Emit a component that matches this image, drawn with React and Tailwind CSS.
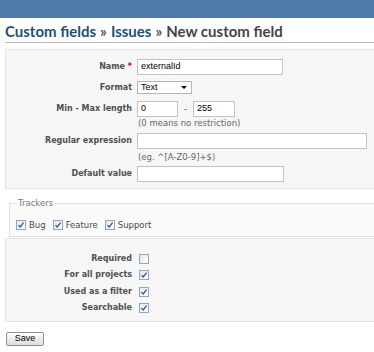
import React from "react";

// Small checkbox like the classic XP-ish one in the screenshot
const Check = ({ checked }) => (
  <span className="inline-flex h-[10px] w-[10px] shrink-0 items-center justify-center border border-[#97a3b6] bg-gradient-to-br from-[#e3e6eb] to-white">
    {checked && (
      <svg width="8" height="8" viewBox="0 0 8 8">
        <path d="M1.5 4.2 L3.2 6 L6.6 1.6" fill="none" stroke="#2a56b8" strokeWidth="1.3" />
      </svg>
    )}
  </span>
);

const Label = ({ children }) => (
  <div className="w-[126px] shrink-0 text-right text-[8px] font-bold text-[#505050]">{children}</div>
);

const TextInput = ({ value = "", width }) => (
  <div
    className="flex h-[16px] items-center border border-[#c3c3c3] bg-white pl-[3px] font-['Liberation_Sans'] text-[9px] text-black"
    style={{ width }}
  >
    {value}
  </div>
);

const App = () => {
  const trackers = ["Bug", "Feature", "Support"];
  const flags = [
    { label: "Required", checked: false },
    { label: "For all projects", checked: true },
    { label: "Used as a filter", checked: true },
    { label: "Searchable", checked: true },
  ];

  return (
    <div className="h-[352px] w-[374px] overflow-hidden bg-white font-['DejaVu_Sans',sans-serif] text-[8.5px] text-[#484848]">
      {/* top bar */}
      <div className="h-[18px] bg-[#507aaa]" />

      <div className="w-[420px] pl-[5px]">
        {/* breadcrumb title */}
        <h2 className="flex h-[25px] items-end border-b border-[#bbbbbb] pb-[3px] font-['Lato',sans-serif] text-[15px] font-bold leading-none text-[#555]">
          <span className="text-[#1d4f7c]">Custom fields</span>
          <span className="mx-[4px] text-[#555]">»</span>
          <span className="text-[#1d4f7c]">Issues</span>
          <span className="mx-[4px] text-[#555]">»</span>
          <span className="text-[#444]">New custom field</span>
        </h2>

        {/* main box */}
        <div className="mt-[6px] border border-[#e4e4e4] bg-[#f6f6f6] pt-[9px] pb-[6px]">
          <div className="flex items-center gap-[5px]">
            <Label>
              Name <span className="text-[#bb0000]">*</span>
            </Label>
            <TextInput value="externalId" width={146} />
          </div>

          <div className="mt-[6px] flex items-center gap-[5px]">
            <Label>Format</Label>
            <div className="flex h-[13px] w-[55px] items-center justify-between border border-[#b5b5b5] bg-white pl-[3px] pr-[4px] font-['Liberation_Sans'] text-[9px] text-black">
              Text
              <span className="h-0 w-0 border-x-[3px] border-t-[3px] border-x-transparent border-t-black" />
            </div>
          </div>

          <div className="mt-[7px] flex items-center gap-[5px]">
            <Label>Min - Max length</Label>
            <TextInput value="0" width={41} />
            <span className="mx-[1px]">-</span>
            <TextInput value="255" width={42} />
          </div>
          <div className="flex h-[13px] items-center pl-[132px] text-[#666]">(0 means no restriction)</div>

          <div className="mt-[3px] flex items-center gap-[5px]">
            <Label>Regular expression</Label>
            <TextInput width={230} />
          </div>
          <div className="flex h-[17px] items-center pl-[132px] text-[#666]">(eg. ^[A-Z0-9]+$)</div>

          <div className="flex items-center gap-[5px]">
            <Label>Default value</Label>
            <TextInput width={147} />
          </div>
        </div>

        {/* trackers */}
        <fieldset className="mt-[8px] ml-[4px] border border-[#e0e0e0] bg-[#fafafa] px-[6px] pb-[4px]">
          <legend className="px-[2px] text-[#777]">Trackers</legend>
          <div className="mt-[9px] flex items-center">
            {trackers.map((t) => (
              <label key={t} className="mr-[7px] flex items-center gap-[3px]">
                <Check checked />
                {t}
              </label>
            ))}
          </div>
        </fieldset>

        {/* flags box */}
        <div className="mt-[1px] border border-[#e4e4e4] bg-[#f6f6f6] pt-[12px] pb-[4px]">
          {flags.map((f) => (
            <div key={f.label} className="flex h-[16.5px] items-center gap-[7px]">
              <Label>{f.label}</Label>
              <Check checked={f.checked} />
            </div>
          ))}
        </div>

        {/* save */}
        <button className="mt-[10px] ml-[1px] flex h-[14px] w-[38px] items-center justify-center rounded-[2px] border border-[#8f8f8f] bg-gradient-to-b from-white to-[#dcdcdc] font-['Liberation_Sans'] text-[9px] text-black">
          Save
        </button>
      </div>
    </div>
  );
};

export default App;
